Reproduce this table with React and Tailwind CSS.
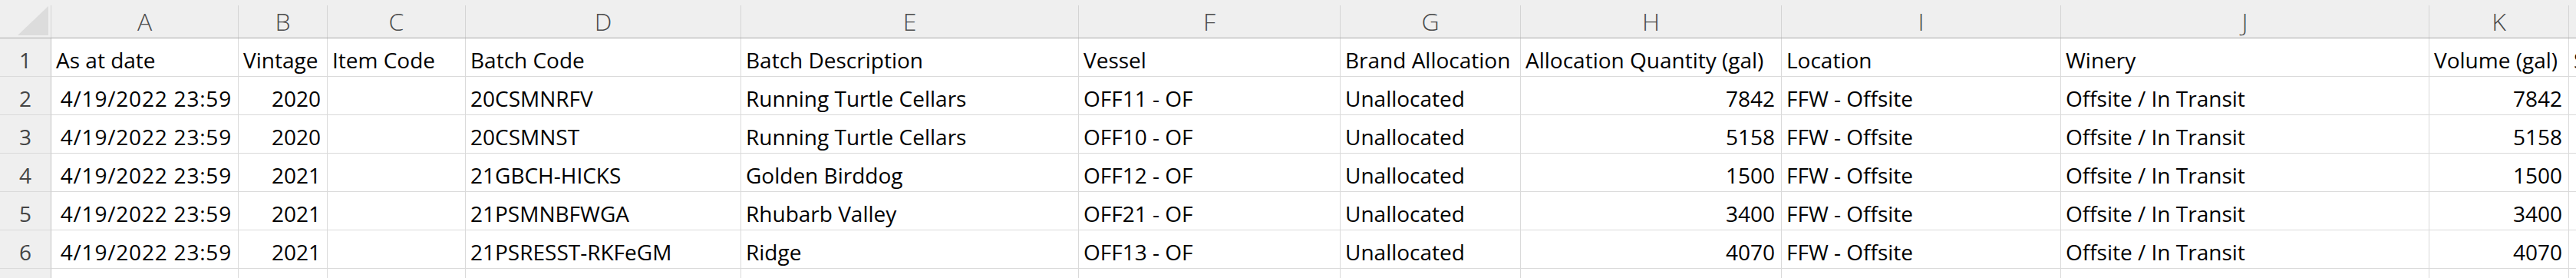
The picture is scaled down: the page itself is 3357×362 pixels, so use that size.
const letters = ["A", "B", "C", "D", "E", "F", "G", "H", "I", "J", "K", "L"];

const header = [
  "As at date",
  "Vintage",
  "Item Code",
  "Batch Code",
  "Batch Description",
  "Vessel",
  "Brand Allocation",
  "Allocation Quantity (gal)",
  "Location",
  "Winery",
  "Volume (gal)",
  "Status",
];

const data = [
  ["4/19/2022 23:59", "2020", "", "20CSMNRFV", "Running Turtle Cellars", "OFF11 - OF", "Unallocated", "7842", "FFW - Offsite", "Offsite / In Transit", "7842", ""],
  ["4/19/2022 23:59", "2020", "", "20CSMNST", "Running Turtle Cellars", "OFF10 - OF", "Unallocated", "5158", "FFW - Offsite", "Offsite / In Transit", "5158", ""],
  ["4/19/2022 23:59", "2021", "", "21GBCH-HICKS", "Golden Birddog", "OFF12 - OF", "Unallocated", "1500", "FFW - Offsite", "Offsite / In Transit", "1500", ""],
  ["4/19/2022 23:59", "2021", "", "21PSMNBFWGA", "Rhubarb Valley", "OFF21 - OF", "Unallocated", "3400", "FFW - Offsite", "Offsite / In Transit", "3400", ""],
  ["4/19/2022 23:59", "2021", "", "21PSRESST-RKFeGM", "Ridge", "OFF13 - OF", "Unallocated", "4070", "FFW - Offsite", "Offsite / In Transit", "4070", ""],
];

// numeric columns sit on the right like Excel does
const rightCols = [0, 1, 7, 10];

const gridCols =
  "grid grid-cols-[67px_244px_116px_180px_359px_440px_341px_235px_340px_364px_480px_182px_160px]";

const Cell = ({ text, right, wide }) => (
  <div
    className={`h-[50px] flex items-end pb-[7px] border-r border-b border-[#dadada] bg-white overflow-hidden whitespace-nowrap text-[28px] leading-none text-black ${
      right ? "justify-end pr-[8px]" : "justify-start pl-[6px]"
    } ${wide ? "tracking-[0.8px]" : ""}`}
  >
    {text}
  </div>
);

const RowNum = ({ n }) => (
  <div className="h-[50px] flex items-end justify-center pb-[7px] bg-[#efefef] border-r border-r-[#c4c4c4] border-b border-b-[#dadada] text-[28px] leading-none text-[#444444]">
    {n}
  </div>
);

export default function App() {
  return (
    <div className="w-[3357px] h-[362px] overflow-hidden bg-white font-['Open_Sans',sans-serif]">
      <div className={`${gridCols} w-max`}>
        {/* column letters */}
        <div className="h-[50px] pt-[7px] bg-[#efefef] border-b border-[#a8a8a8]">
          <div className="h-full border-r border-[#d4d4d4] flex items-end justify-end pr-[3px] pb-[3px]">
            <svg width="40" height="38" viewBox="0 0 40 38">
              <polygon points="0,38 40,38 40,0" fill="#dcdcdc" />
            </svg>
          </div>
        </div>
        {letters.map((l) => (
          <div key={l} className="h-[50px] pt-[7px] bg-[#efefef] border-b border-[#a8a8a8]">
            <div className="h-full border-r border-[#d4d4d4] flex items-end justify-center pb-[5px] text-[32px] leading-none text-[#4a4a4a] font-light">
              {l}
            </div>
          </div>
        ))}

        {/* row 1 headings */}
        <RowNum n={1} />
        {header.map((h, i) => (
          <Cell key={i} text={h} />
        ))}

        {data.map((row, r) => (
          <Row key={r} n={r + 2} row={row} />
        ))}

        {/* partial row 7, only its top shows */}
        <RowNum n="" />
        {letters.map((l) => (
          <Cell key={l} text="" />
        ))}
      </div>
    </div>
  );
}

function Row({ n, row }) {
  return (
    <>
      <RowNum n={n} />
      {row.map((v, i) => (
        <Cell key={i} text={v} right={rightCols.includes(i)} wide={i === 0} />
      ))}
    </>
  );
}
